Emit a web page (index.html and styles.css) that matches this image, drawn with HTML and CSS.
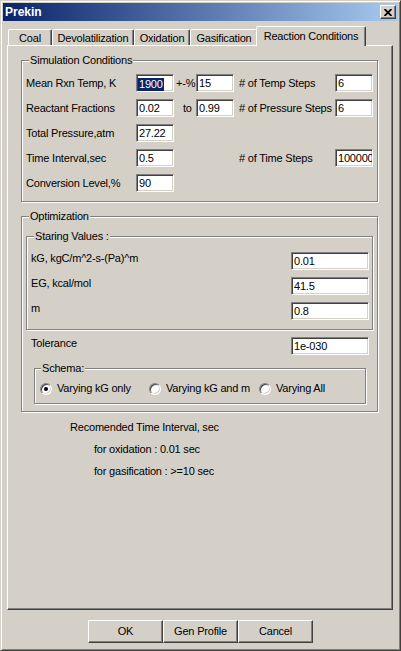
FILE: index.html
```html
<!DOCTYPE html>
<html>
<head>
<meta charset="utf-8">
<link rel="stylesheet" href="styles.css">
</head>
<body>
<div class="window">
  <div class="titlebar">
    <span class="title">Prekin</span>
    <div class="close">
      <svg width="8" height="7" viewBox="0 0 8 7"><path d="M0.5 0 L7.5 7 M7.5 0 L0.5 7" stroke="#000" stroke-width="1.8" fill="none"/></svg>
    </div>
  </div>
  <div class="dialog">
    <div class="tabs">
      <div class="tab tab-coal">Coal</div>
      <div class="tab tab-devol">Devolatilization</div>
      <div class="tab tab-oxid">Oxidation</div>
      <div class="tab tab-gasif">Gasification</div>
      <div class="tab tab-react active">Reaction Conditions</div>
    </div>
    <div class="panel">
      <div class="group sim">
        <div class="legend">Simulation Conditions</div>
        <div class="sim-grid">
          <span class="c1">Mean Rxn Temp, K</span>
          <div class="edit"><span class="sel">1900</span></div>
          <span class="mid">+-%</span>
          <div class="edit">15</div>
          <span class="lbl2"># of Temp Steps</span>
          <div class="edit">6</div>

          <span class="c1">Reactant Fractions</span>
          <div class="edit">0.02</div>
          <span class="mid to">to</span>
          <div class="edit">0.99</div>
          <span class="lbl2"># of Pressure Steps</span>
          <div class="edit">6</div>

          <span class="c1">Total Pressure,atm</span>
          <div class="edit">27.22</div>

          <span class="c1">Time Interval,sec</span>
          <div class="edit">0.5</div>
          <span class="lbl2 c5"># of Time Steps</span>
          <div class="edit">100000</div>

          <span class="c1">Conversion Level,%</span>
          <div class="edit">90</div>
        </div>
      </div>

      <div class="group opt">
        <div class="legend">Optimization</div>
        <div class="group sub">
          <div class="legend">Staring Values :</div>
          <div class="val-grid">
            <span>kG, kgC/m^2-s-(Pa)^m</span>
            <div class="edit">0.01</div>
            <span>EG, kcal/mol</span>
            <div class="edit">41.5</div>
            <span>m</span>
            <div class="edit">0.8</div>
          </div>
        </div>
        <div class="tol">
          <span>Tolerance</span>
          <div class="edit">1e-030</div>
        </div>
        <div class="group schema">
          <div class="legend schema-legend">Schema:</div>
          <div class="radio-row">
            <div class="radio"><span class="dot checked"></span><span>Varying kG only</span></div>
            <div class="radio"><span class="dot"></span><span>Varying kG and m</span></div>
            <div class="radio"><span class="dot"></span><span>Varying All</span></div>
          </div>
        </div>
      </div>

      <div class="notes">
        <div class="note">Recomended Time Interval, sec</div>
        <div class="note indent">for oxidation : 0.01 sec</div>
        <div class="note indent">for gasification : &gt;=10 sec</div>
      </div>
    </div>
    <div class="buttons">
      <div class="btn">OK</div>
      <div class="btn">Gen Profile</div>
      <div class="btn">Cancel</div>
    </div>
  </div>
</div>
</body>
</html>
```

FILE: styles.css
```css
* { box-sizing: border-box; }

html, body {
  margin: 0;
  padding: 0;
  background: #d4d0c8;
}

body {
  font-family: "Liberation Sans", Arial, sans-serif;
  font-size: 11px;
  letter-spacing: -0.2px;
  line-height: 13px;
  color: #000;
}

.window {
  width: 401px;
  height: 651px;
  border: 1px solid;
  border-color: #d4d0c8 #404040 #404040 #d4d0c8;
  box-shadow: inset 1px 1px #fff, inset -1px -1px #808080;
  padding: 2px;
  display: flex;
  flex-direction: column;
}

.titlebar {
  height: 18px;
  flex: none;
  background: linear-gradient(to right, #0a246a, #a6caf0);
  display: flex;
  align-items: center;
  justify-content: space-between;
  padding: 0 2px 0 2px;
}

.title {
  color: #fff;
  font-weight: bold;
  font-size: 12px;
  letter-spacing: 0;
  padding-left: 0;
}

.close {
  width: 16px;
  height: 14px;
  border: 1px solid;
  border-color: #fff #404040 #404040 #fff;
  box-shadow: inset -1px -1px #808080;
  background: #d4d0c8;
  display: flex;
  align-items: center;
  justify-content: center;
}

.close svg { display: block; }

.dialog {
  flex: 1;
  display: flex;
  flex-direction: column;
  padding: 5px 0 0 4px;
}

.tabs {
  display: flex;
  align-items: flex-end;
  height: 19px;
  margin-left: 1px;
}

.tab {
  height: 16px;
  background: #d4d0c8;
  border: 1px solid;
  border-bottom: none;
  border-color: #fff #404040 transparent #fff;
  box-shadow: inset -1px 0 #808080;
  border-radius: 2px 2px 0 0;
  display: flex;
  justify-content: center;
  align-items: center;
  padding-top: 2px;
  white-space: nowrap;
}

.tab-coal { width: 44px; }
.tab-devol { width: 82px; }
.tab-oxid { width: 56px; }
.tab-gasif { width: 68px; }
.tab-react { width: 110px; }

.tab.active {
  height: 20px;
  margin: 0 -2px -1px -2px;
  position: relative;
  z-index: 1;
  padding-top: 0;
  padding-bottom: 1px;
}

.panel {
  width: 386px;
  height: 565px;
  flex: none;
  border: 1px solid;
  border-color: #fff #404040 #404040 #fff;
  box-shadow: inset -1px -1px #808080;
  padding: 14px 14px 0 13px;
}

.group {
  border: 1px solid #808080;
  box-shadow: inset 1px 1px #fff, 1px 1px #fff;
  padding: 0 4px 9px 4px;
}

.legend {
  width: max-content;
  margin: -7px 0 0 3px;
  padding: 0 1px;
  background: #d4d0c8;
  line-height: 13px;
}

.sim-grid {
  display: grid;
  grid-template-columns: 110px 38px 22px 38px 101px 38px;
  grid-auto-rows: 18px;
  row-gap: 7px;
  margin-top: 7px;
  align-items: center;
  white-space: nowrap;
}

.c1 { grid-column: 1; }
.c5 { grid-column: 5; }
.mid { padding-left: 2px; }
.mid.to { padding-left: 9px; }
.lbl2 { padding-left: 5px; }

.edit {
  height: 18px;
  background: #fff;
  border: 1px solid;
  border-color: #808080 #fff #fff #808080;
  box-shadow: inset 1px 1px #404040, inset -1px -1px #d4d0c8;
  padding: 0 1px 0 2px;
  line-height: 16px;
  overflow: hidden;
  white-space: nowrap;
}

.sel {
  display: inline-block;
  background: #0a246a;
  color: #fff;
  line-height: 13px;
  vertical-align: middle;
  margin-left: -1px;
  padding: 0 1px;
}

.opt {
  margin-top: 14px;
  padding-bottom: 7px;
}

.sub {
  margin-top: 13px;
  padding: 0 3px 9px 4px;
}

.val-grid {
  display: grid;
  grid-template-columns: 1fr 78px;
  grid-auto-rows: 18px;
  row-gap: 7px;
  margin-top: 9px;
  align-items: start;
}

.tol {
  display: grid;
  grid-template-columns: 1fr 78px;
  align-items: start;
  margin-top: 7px;
  padding: 0 4px 0 5px;
}

.schema {
  margin: 13px 7px 0 8px;
  padding: 0 4px 8px 4px;
}

.schema-legend { margin-left: 2px; }

.radio-row {
  display: grid;
  grid-template-columns: 109px 110px auto;
  margin: 7px 0 0 1px;
  white-space: nowrap;
}

.radio {
  display: flex;
  align-items: center;
  gap: 5px;
}

.dot {
  width: 12px;
  height: 12px;
  flex: none;
  border-radius: 50%;
  border: 1px solid;
  border-color: #808080 #fff #fff #808080;
  box-shadow: inset 1px 1px #404040, inset -1px -1px #d4d0c8;
  background: #fff;
  display: flex;
  align-items: center;
  justify-content: center;
}

.dot.checked::after {
  content: "";
  width: 4px;
  height: 4px;
  border-radius: 50%;
  background: #000;
}

.notes {
  margin-top: 9px;
  padding-left: 49px;
}

.note {
  line-height: 13px;
  margin-bottom: 9px;
}

.note.indent { padding-left: 24px; }

.buttons {
  display: flex;
  margin-top: 10px;
  padding-left: 81px;
}

.btn {
  width: 75px;
  height: 23px;
  border: 1px solid;
  border-color: #fff #404040 #404040 #fff;
  box-shadow: inset -1px -1px #808080;
  background: #d4d0c8;
  display: flex;
  align-items: center;
  justify-content: center;
}
```
